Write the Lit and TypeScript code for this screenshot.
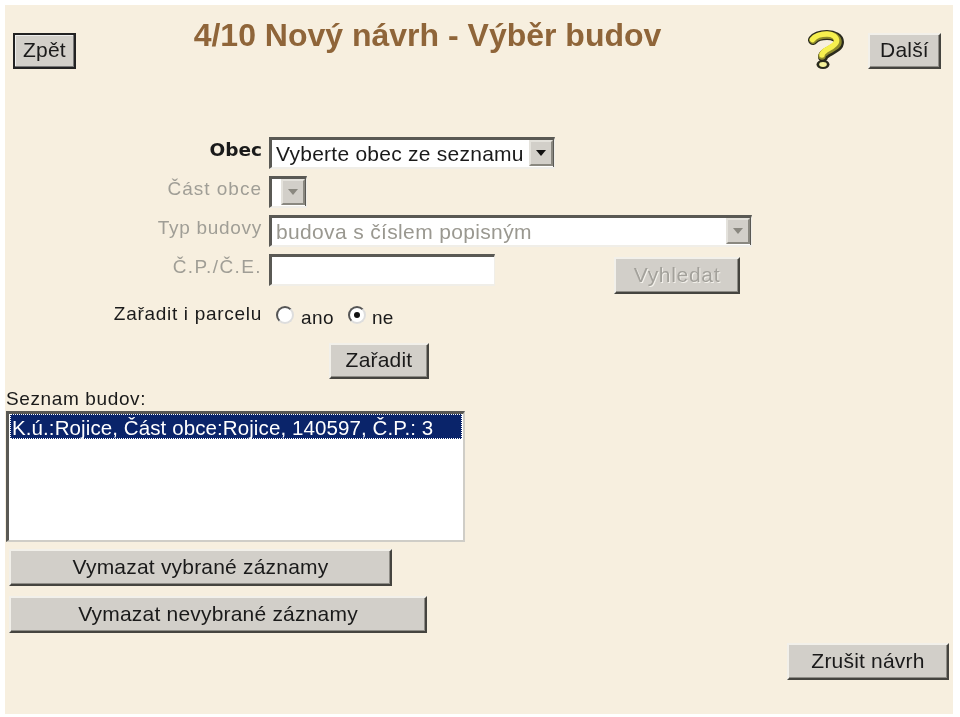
import { LitElement, html, css, svg } from "lit";
import { customElement } from "lit/decorators.js";

const arrow = svg`<svg class="arrow" width="10" height="6" viewBox="0 0 10 6"><path d="M0 0H10L5 6Z" fill="currentColor"/></svg>`;

@customElement("app-root")
export class AppRoot extends LitElement {
  static styles = css`
    :host { display: block; height: 717px; background: #fff; font-family: "Liberation Sans", Arial, sans-serif; color: #1a1a1a; overflow: hidden; }
    * { box-sizing: border-box; }
    .panel { margin: 5px 0 0 5px; width: 948px; height: 709px; background: #f7efdf; display: flex; flex-direction: column; filter: blur(0.35px); }
    .btn { font: 21px "Liberation Sans", Arial, sans-serif; letter-spacing: 0.2px; color: #1a1a1a; background: #d2cfc9; padding: 0 0 2px; display: flex; align-items: center; justify-content: center; border-style: solid; border-width: 2px; border-color: #f2f0ea #45443f #45443f #f2f0ea; box-shadow: inset -1px -1px 0 #8f8d87; white-space: nowrap; flex: none; }
    .btn.default { border: 2px solid #222; box-shadow: inset -1px -1px 0 #777, inset 1px 1px 0 #eee; }
    .btn.off { color: #a3a19b; text-shadow: 1px 1px 0 #f4f2ec; letter-spacing: 0.7px; }
    .header { display: flex; align-items: flex-start; height: 132px; padding: 28px 12px 0 8px; flex: none; }
    .back { width: 63px; height: 36px; }
    .title { width: 731px; margin-top: -15px; padding-right: 28px; text-align: center; font-size: 32px; font-weight: 700; color: #8f6539; white-space: nowrap; line-height: 34px; }
    .help { margin: -3px 0 0 0; width: 38px; height: 40px; flex: none; }
    .next { width: 73px; height: 36px; margin-left: 23px; }
    .form { display: grid; grid-template-columns: 257px 1fr; column-gap: 7px; row-gap: 7px; align-items: start; flex: none; }
    .lab { text-align: right; font-size: 19px; line-height: 24px; letter-spacing: 0.7px; padding-top: 1px; white-space: nowrap; }
    .lab.b { font-weight: 700; font-family: "DejaVu Sans", sans-serif; font-size: 18.5px; letter-spacing: 0; }
    .lab.off { color: #a09e96; }
    .lab.wide { letter-spacing: 1px; }
    .lab.wider { letter-spacing: 1.4px; }
    .sunken { background: #fff; border-style: solid; border-width: 3px 1px 2px 3px; border-color: #5a5954 #f0eee8 #f0eee8 #5a5954; display: flex; height: 32px; font-size: 21px; }
    .select { box-shadow: inset -1px 0 0 #5a5954; padding-right: 1px; }
    .sel1 { width: 286px; }
    .sel2 { width: 38px; }
    .sel3 { width: 483px; }
    .input { width: 226px; }
    .val { flex: 1; padding-left: 4px; line-height: 28px; white-space: nowrap; letter-spacing: 0.25px; }
    .val.off { color: #9a9890; letter-spacing: 0.35px; }
    .drop { width: 24px; flex: none; margin: 0 0 1px 0; background: #d2cfc9; border: 2px solid; border-color: #e4e2dc #8a8880 #8a8880 #e4e2dc; display: flex; align-items: center; justify-content: center; color: #111; }
    .drop.off { color: #8a8880; }
    .cp { display: flex; align-items: flex-start; }
    .search { width: 126px; height: 37px; margin: 3px 0 0 119px; }
    .radios { display: flex; align-items: flex-start; padding: 2px 0 0 7px; height: 30px; font-size: 19px; letter-spacing: 0.4px; }
    .radio { width: 18px; height: 18px; border-radius: 50%; background: #fff; border: 2px solid; border-color: #555 #ddd #ddd #555; flex: none; margin-top: 3px; display: flex; align-items: center; justify-content: center; }
    .radio i { width: 6px; height: 6px; border-radius: 50%; background: #111; }
    .radio-t { margin: 3px 14px 0 7px; line-height: 24px; }
    .radio-t.last { margin-left: 6px; }
    .add { width: 100px; height: 36px; margin: 12px 0 0 324px; }
    .list-label { font-size: 19px; line-height: 24px; letter-spacing: 0.62px; margin: 8px 0 0 1px; }
    .list { width: 459px; height: 131px; margin: 0 0 0 1px; background: #fff; border-style: solid; border-width: 3px 2px 2px 3px; border-color: #5a5954 #cfcdc7 #cfcdc7 #5a5954; padding: 0 1px; flex: none; }
    .option { height: 25px; background: #0a246a; color: #fff; outline: 1px dotted #fff; outline-offset: -1px; font-size: 20.5px; line-height: 27px; padding-left: 2px; white-space: nowrap; letter-spacing: 0.1px; }
    .del1 { width: 383px; height: 37px; margin: 7px 0 0 4px; }
    .del2 { width: 418px; height: 37px; margin: 10px 0 0 4px; }
    .cancel { width: 162px; height: 37px; margin: 10px 0 0 782px; }
  `;

  render() {
    return html`
      <div class="panel">
        <div class="header">
          <button class="btn default back">Zpět</button>
          <div class="title">4/10 Nový návrh - Výběr budov</div>
          <svg class="help" viewBox="0 0 38 40">
            <path d="M6 10C9 6 13 5 20 5C27 5 32 8 32 12C32 17 26 19 21 22C18 24 16 25 16 27" fill="none" stroke="#2a2a1c" stroke-width="10" stroke-linecap="round" stroke-linejoin="round"/>
            <ellipse cx="16" cy="34.5" rx="6.5" ry="4.5" fill="#2a2a1c"/>
            <path d="M6 10C9 6 13 5 20 5C27 5 31 8 31 12C31 16 25 18 20 21C17 23 15 24 15 26" fill="none" stroke="#8d8a2c" stroke-width="7.5" stroke-linecap="round" stroke-linejoin="round"/>
            <path d="M5.5 9.5C9 5 13 4 20 4C26 4 30 7 29.5 11.5C29 15 24 17 19 20C16.5 22 15 23 15 25" fill="none" stroke="#f6f04e" stroke-width="5.5" stroke-linecap="round" stroke-linejoin="round"/>
            <ellipse cx="16" cy="34.5" rx="3.8" ry="2.4" fill="#f6f29a"/>
          </svg>
          <button class="btn next">Další</button>
        </div>
        <div class="form">
          <div class="lab b">Obec</div>
          <div class="sunken select sel1"><div class="val">Vyberte obec ze seznamu</div><div class="drop">${arrow}</div></div>
          <div class="lab off wide">Část obce</div>
          <div class="sunken select sel2"><div class="val"></div><div class="drop off">${arrow}</div></div>
          <div class="lab off">Typ budovy</div>
          <div class="sunken select sel3"><div class="val off">budova s číslem popisným</div><div class="drop off">${arrow}</div></div>
          <div class="lab off wider">Č.P./Č.E.</div>
          <div class="cp">
            <div class="sunken input"></div>
            <button class="btn off search">Vyhledat</button>
          </div>
          <div class="lab">Zařadit i parcelu</div>
          <div class="radios">
            <span class="radio"></span><span class="radio-t">ano</span>
            <span class="radio"><i></i></span><span class="radio-t last">ne</span>
          </div>
        </div>
        <button class="btn add">Zařadit</button>
        <div class="list-label">Seznam budov:</div>
        <div class="list"><div class="option">K.ú.:Rojice, Část obce:Rojice, 140597, Č.P.: 3</div></div>
        <button class="btn del1">Vymazat vybrané záznamy</button>
        <button class="btn del2">Vymazat nevybrané záznamy</button>
        <button class="btn cancel">Zrušit návrh</button>
      </div>
    `;
  }
}
